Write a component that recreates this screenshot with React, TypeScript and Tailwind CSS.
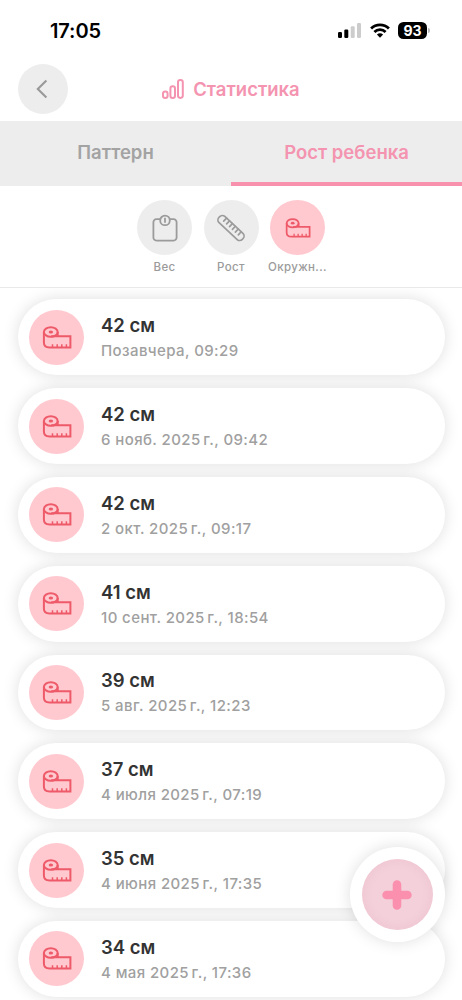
import type { ReactNode } from "react";
import clsx from "clsx";

interface Measurement {
  value: string;
  date: string;
}

const MEASUREMENTS: Measurement[] = [
  { value: "42 см", date: "Позавчера, 09:29" },
  { value: "42 см", date: "6 нояб. 2025\u202fг., 09:42" },
  { value: "42 см", date: "2 окт. 2025\u202fг., 09:17" },
  { value: "41 см", date: "10 сент. 2025\u202fг., 18:54" },
  { value: "39 см", date: "5 авг. 2025\u202fг., 12:23" },
  { value: "37 см", date: "4 июля 2025\u202fг., 07:19" },
  { value: "35 см", date: "4 июня 2025\u202fг., 17:35" },
  { value: "34 см", date: "4 мая 2025\u202fг., 17:36" },
];

function TapeIcon({ className }: { className?: string }) {
  return (
    <svg viewBox="0 0 30 23" fill="none" stroke="currentColor" strokeWidth="2" className={className}>
      <ellipse cx="8.8" cy="6" rx="6.9" ry="4.8" />
      <ellipse cx="8.9" cy="6" rx="2.2" ry="1.6" fill="currentColor" stroke="none" />
      <path d="M1.9 6v10.6c0 3.2 2.2 4.9 5.6 4.9h20.9V10.2H9.2" />
      <path d="M15.7 10.2V6" />
      <path d="M10.5 21v-2.8M15.2 21v-2.8M19.8 21v-2.8M24.4 21v-2.8" strokeWidth="1.5" />
    </svg>
  );
}

function ScaleIcon() {
  return (
    <svg viewBox="0 0 26 28" fill="none" stroke="currentColor" strokeWidth="1.8" className="h-7 w-[26px]">
      <path d="M8.3 5.2H4.4a3 3 0 0 0-3 3v15.4a3 3 0 0 0 3 3h17.2a3 3 0 0 0 3-3V8.2a3 3 0 0 0-3-3h-3.9" />
      <circle cx="13" cy="6.4" r="4.8" />
      <path d="M13 3.8v5" />
    </svg>
  );
}

function RulerIcon() {
  return (
    <svg viewBox="0 0 28 28" fill="none" stroke="currentColor" strokeWidth="1.7" className="size-7">
      <g transform="rotate(43 14 14)">
        <rect x="-2" y="9.8" width="32" height="8.4" rx="3.6" />
        <path d="M4 9.8v4.2M8 9.8v4.2M12 9.8v4.2M16 9.8v4.2M20 9.8v4.2M24 9.8v4.2" strokeLinecap="round" />
      </g>
    </svg>
  );
}

function StatusBar() {
  return (
    <div className="flex h-[61px] items-center justify-between pr-[32px] pl-[50px]">
      <span className="text-[20px] leading-6 font-semibold tracking-[-0.1px] text-black">17:05</span>
      <div className="flex items-center">
        <svg viewBox="0 0 23 15" className="h-[15px] w-[23px]">
          <rect y="9" width="4" height="6" rx="1.2" />
          <rect x="6.3" y="6.5" width="4" height="8.5" rx="1.2" />
          <rect x="12.7" y="3.3" width="4" height="11.7" rx="1.2" fill="#cccccc" />
          <rect x="19" width="4" height="15" rx="1.2" fill="#cccccc" />
        </svg>
        <svg viewBox="0 0 20 15" fill="none" stroke="#000" strokeWidth="2.8" className="ml-[9px] h-[15px] w-5">
          <path d="M1.1 5.5a12.8 12.8 0 0 1 17.8 0" />
          <path d="M4.4 9a8 8 0 0 1 11.2 0" />
          <path d="M10 14.8 6.9 11.6a4.5 4.5 0 0 1 6.2 0z" fill="#000" stroke="none" />
        </svg>
        <span className="ml-2 flex h-[17px] w-[29px] items-center justify-center rounded-[5.5px] bg-black text-[14px] leading-none font-bold text-white">
          93
        </span>
        <span className="ml-px h-[5px] w-[2px] rounded-r-full bg-[#bdbdbd]" />
      </div>
    </div>
  );
}

function Header() {
  return (
    <header className="grid h-[60px] grid-cols-[50px_1fr_50px] items-start px-[18px] pt-[3px]">
      <button className="flex size-[50px] items-center justify-center rounded-full bg-[#ededed] text-[#999999]">
        <svg viewBox="0 0 12 20" fill="none" stroke="currentColor" strokeWidth="2.1" className="mr-[2px] h-5 w-3">
          <path d="M10.4 1.6 1.8 10l8.6 8.4" />
        </svg>
      </button>
      <h1 className="flex h-[50px] items-center justify-center gap-[9px] text-[#f494b0]">
        <svg viewBox="0 0 22 20" fill="none" stroke="currentColor" strokeWidth="2" className="h-5 w-[22px]">
          <rect x="1" y="12.5" width="4.6" height="6.4" rx="2.2" />
          <rect x="8.4" y="7.2" width="4.6" height="11.7" rx="2.2" />
          <rect x="16" y="1" width="4.8" height="17.9" rx="2.3" />
        </svg>
        <span className="text-[18.5px] leading-6 font-semibold">Статистика</span>
      </h1>
    </header>
  );
}

function Tab({ active, children }: { active?: boolean; children: ReactNode }) {
  return (
    <button
      className={clsx(
        "h-[65px] flex-1 border-b-4 pt-[3px] text-[18.5px] font-semibold",
        active ? "border-[#f791ae] text-[#f494b0]" : "border-transparent text-[#a3a3a3]",
      )}
    >
      {children}
    </button>
  );
}

function Metric({ label, active, children }: { label: string; active?: boolean; children: ReactNode }) {
  return (
    <div className="flex w-[66.5px] flex-col items-center">
      <div
        className={clsx(
          "flex size-[55px] items-center justify-center rounded-full",
          active ? "bg-[#ffc9cf] text-[#ee5a69]" : "bg-[#ededed] text-[#9b9b9b]",
        )}
      >
        {children}
      </div>
      <span className="mt-1 text-[11.5px] leading-4 font-medium tracking-[0.35px] whitespace-nowrap text-[#9b9b9b]">
        {label}
      </span>
    </div>
  );
}

function MeasurementCard({ value, date }: Measurement) {
  return (
    <li className="flex h-[75.8px] shrink-0 items-center rounded-full bg-white pl-[11.5px] shadow-[0_0_16px_rgba(0,0,0,0.13)]">
      <div className="flex size-[55px] items-center justify-center rounded-full bg-[#ffc9cf] text-[#ee5a69]">
        <TapeIcon className="h-[23px] w-[30px]" />
      </div>
      <div className="ml-[17px] pt-[2px]">
        <p className="text-[18.5px] leading-6 font-semibold text-[#333333]">{value}</p>
        <p className="mt-[2px] text-[15px] leading-6 font-medium tracking-[0.4px] text-[#a0a0a0]">{date}</p>
      </div>
    </li>
  );
}

export default function App() {
  return (
    <div className="relative flex h-[1000px] w-[462px] flex-col overflow-hidden bg-white font-['Inter','Liberation_Sans',sans-serif]">
      <StatusBar />
      <Header />
      <nav className="flex h-[65px] shrink-0 bg-[#ededed]">
        <Tab>Паттерн</Tab>
        <Tab active>Рост ребенка</Tab>
      </nav>

      <div className="flex h-[102px] shrink-0 justify-center border-b border-[#e9e9e9] pt-[14px]">
        <Metric label="Вес">
          <ScaleIcon />
        </Metric>
        <Metric label="Рост">
          <RulerIcon />
        </Metric>
        <Metric label="Окружн..." active>
          <TapeIcon className="h-5 w-[26px]" />
        </Metric>
      </div>

      <ul className="flex min-h-0 flex-1 flex-col gap-[13px] overflow-hidden px-[17.5px] pt-[11.4px]">
        {MEASUREMENTS.map((m) => (
          <MeasurementCard key={m.date} {...m} />
        ))}
      </ul>

      {/* Floating add button */}
      <button className="absolute right-[17.5px] bottom-[58px] flex size-[95px] items-center justify-center rounded-full bg-white shadow-[0_0_16px_rgba(0,0,0,0.13)]">
        <span className="flex size-[71px] items-center justify-center rounded-full bg-[#f3d0da] shadow-[inset_0_0_10px_rgba(225,150,175,0.22)]">
          <svg viewBox="0 0 30 30" stroke="#fb8fae" strokeWidth="8.6" strokeLinecap="round" className="size-[30px]">
            <path d="M15 4.6v20.8M4.6 15h20.8" />
          </svg>
        </span>
      </button>
    </div>
  );
}
